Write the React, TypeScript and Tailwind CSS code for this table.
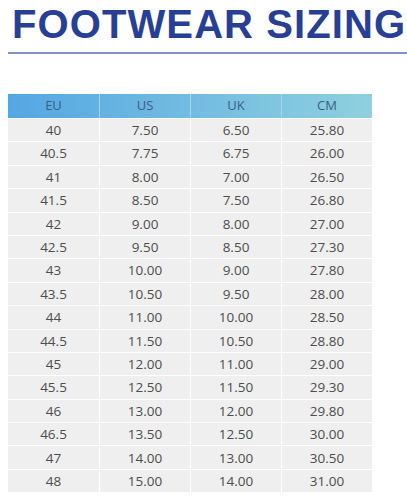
const rows: [string, string, string, string][] = [
  ["40", "7.50", "6.50", "25.80"],
  ["40.5", "7.75", "6.75", "26.00"],
  ["41", "8.00", "7.00", "26.50"],
  ["41.5", "8.50", "7.50", "26.80"],
  ["42", "9.00", "8.00", "27.00"],
  ["42.5", "9.50", "8.50", "27.30"],
  ["43", "10.00", "9.00", "27.80"],
  ["43.5", "10.50", "9.50", "28.00"],
  ["44", "11.00", "10.00", "28.50"],
  ["44.5", "11.50", "10.50", "28.80"],
  ["45", "12.00", "11.00", "29.00"],
  ["45.5", "12.50", "11.50", "29.30"],
  ["46", "13.00", "12.00", "29.80"],
  ["46.5", "13.50", "12.50", "30.00"],
  ["47", "14.00", "13.00", "30.50"],
  ["48", "15.00", "14.00", "31.00"],
];

const headers = ["EU", "US", "UK", "CM"];

export default function App() {
  return (
    <div className="w-[407px] h-[504px] bg-white overflow-hidden">
      {/* Title */}
      <div className="pl-[12px] pt-[2px] h-[52px]">
        <h1 className="text-[40px] leading-[44px] font-bold text-[#283f96] tracking-[1.1px] whitespace-nowrap [font-family:'Liberation_Sans',Arial,sans-serif]">
          FOOTWEAR SIZING
        </h1>
      </div>
      <div className="ml-[8px] h-[2px] bg-[#8393c8]" />

      {/* Table */}
      <div className="mt-[40px] ml-[8px] w-[364px] [font-family:'Open_Sans',sans-serif]">
        <div className="grid grid-cols-4 h-[24px] bg-gradient-to-r from-[#55a7e3] to-[#8ed0de]">
          {headers.map((h, i) => (
            <div
              key={h}
              className={`flex items-center justify-center text-[13px] text-[#3a5d86] ${i > 0 ? "border-l border-[#a9d6ee]" : ""}`}
            >
              {h}
            </div>
          ))}
        </div>
        {rows.map((r, ri) => (
          <div key={ri} className="grid grid-cols-4 h-[23.4px] bg-[#efefef] border-t border-white">
            {r.map((c, ci) => (
              <div
                key={ci}
                className={`flex items-center justify-center text-[13.5px] text-[#4d4d4d] ${ci > 0 ? "border-l border-white" : ""}`}
              >
                {c}
              </div>
            ))}
          </div>
        ))}
      </div>
    </div>
  );
}
